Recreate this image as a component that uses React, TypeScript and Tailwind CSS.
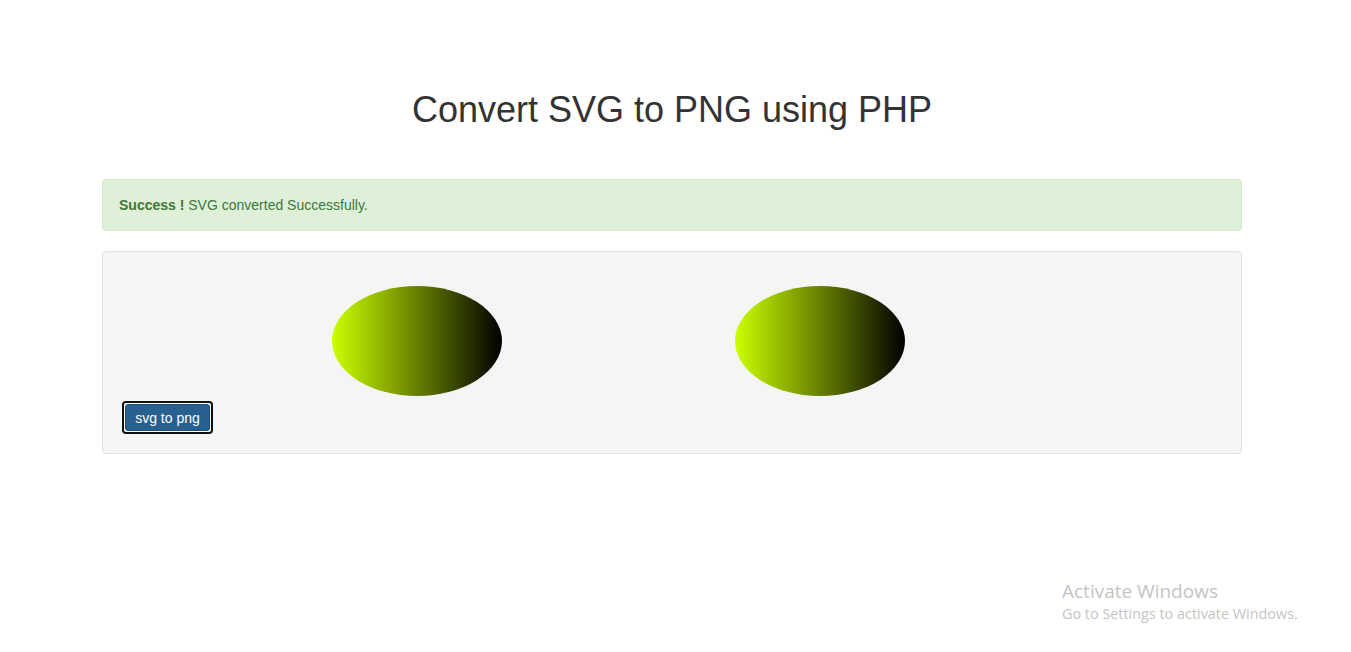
import React from "react";

function Ellipse({ id }: { id: string }) {
  return (
    <svg width="400" height="130" className="block shrink-0">
      <defs>
        <linearGradient id={id} x1="0%" y1="0%" x2="100%" y2="0%">
          <stop offset="0%" stopColor="#ccff00" />
          <stop offset="100%" stopColor="#000000" />
        </linearGradient>
      </defs>
      <ellipse cx="200" cy="70" rx="85" ry="55" fill={`url(#${id})`} />
    </svg>
  );
}

export default function App() {
  return (
    <div className="relative min-h-[652px] bg-white text-[#333] font-['Liberation_Sans',Arial,sans-serif]">
      <div className="w-[1140px] ml-[102px] pt-[90px]">
        <h1 className="text-center text-[36px] leading-[40px] text-[#333] mb-[49px]">
          Convert SVG to PNG using PHP
        </h1>
        <div className="border border-[#d6e9c6] bg-[#dff0d8] text-[#3c763d] rounded-[4px] py-[15px] pl-[16px] pr-[15px] text-[14px] leading-[20px] mb-[20px]">
          <strong className="font-bold">Success !</strong> SVG converted Successfully.
        </div>
        <div className="border border-[#e3e3e3] bg-[#f5f5f5] rounded-[4px] p-[19px]">
          <div className="flex gap-[3px] ml-[95px] h-[130px]">
            <Ellipse id="g1" />
            <Ellipse id="g2" />
          </div>
          <div className="h-[33px] w-[91px] rounded-[4px] border-2 border-[#111] p-[1px] bg-white">
            <button className="w-full h-full rounded-[3px] bg-[#286090] border border-[#204d74] text-white text-[14px] leading-[20px] flex items-center justify-center">
              svg to png
            </button>
          </div>
        </div>
      </div>
      <div className="absolute left-[1062px] top-[579px] text-[#c4c4c4] font-['Open_Sans','Noto_Sans',sans-serif]">
        <div className="text-[19px] leading-[25px]">Activate Windows</div>
        <div className="text-[14.4px] leading-[20px]">Go to Settings to activate Windows.</div>
      </div>
    </div>
  );
}
